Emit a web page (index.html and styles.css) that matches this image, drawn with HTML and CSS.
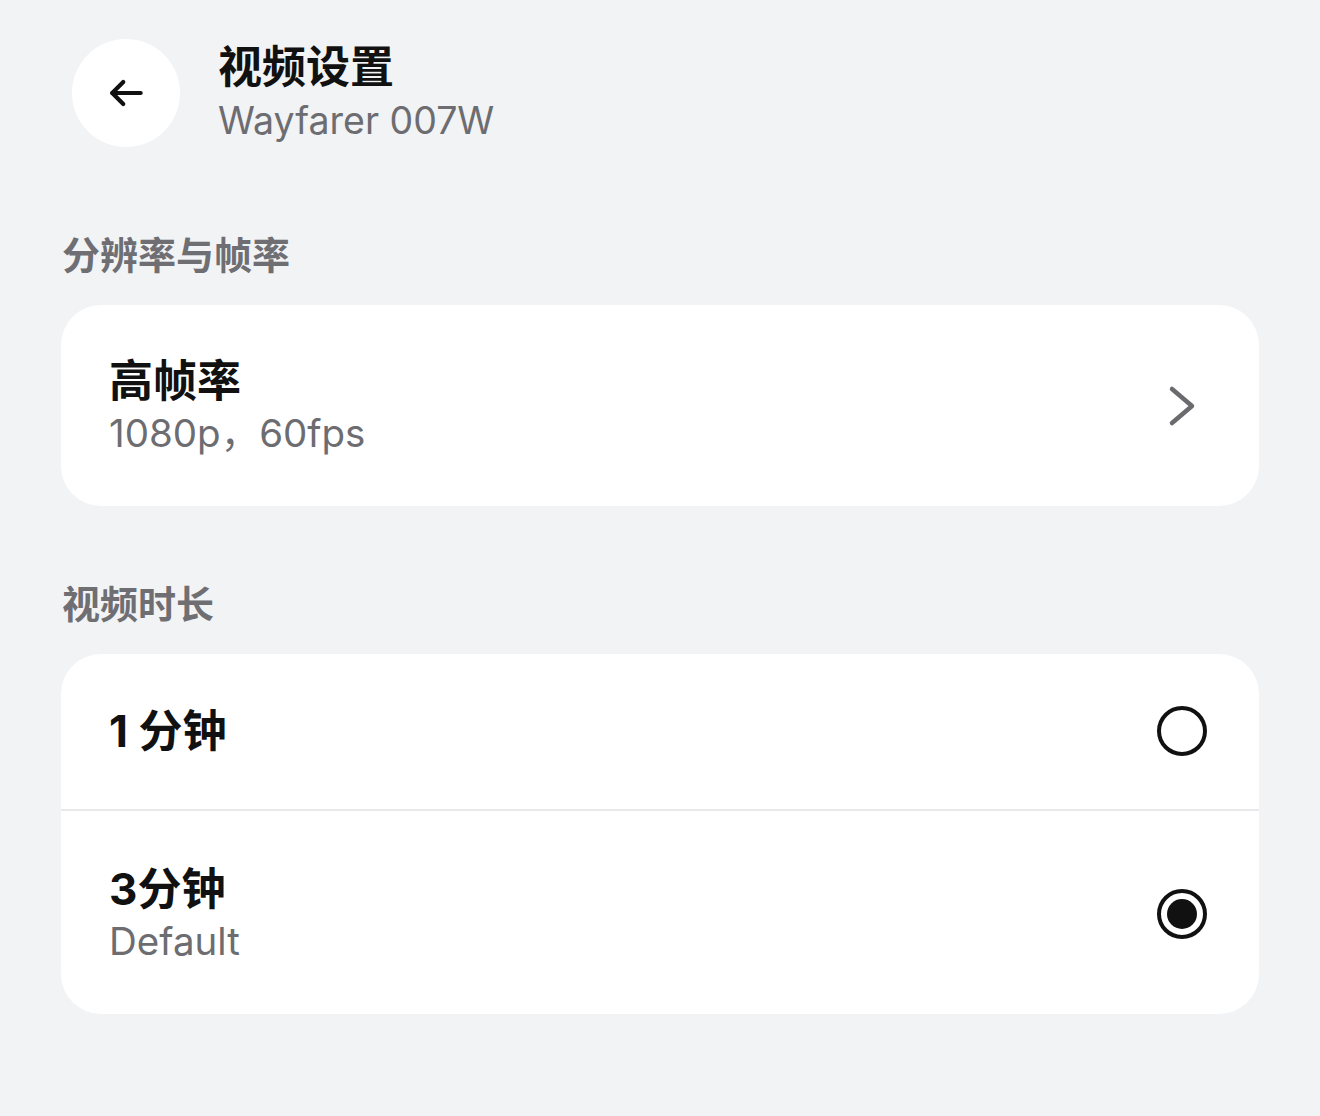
FILE: index.html
```html
<!DOCTYPE html>
<html lang="zh-CN">
<head>
    <meta charset="UTF-8">
    <meta name="viewport" content="width=device-width, initial-scale=1.0">
    <title>视频设置</title>
    <link rel="stylesheet" href="styles.css">
</head>
<body>

<div id="page">
    <div class="header">
        <div class="back-btn">
            <svg width="44" height="44" viewBox="0 0 24 24" fill="none" stroke="#111" stroke-width="2.3" stroke-linecap="round" stroke-linejoin="round">
                <path d="M20 12H4.5"/>
                <path d="M10.5 6l-6 6 6 6"/>
            </svg>
        </div>
        <div class="header-text">
            <div class="title">视频设置</div>
            <div class="subtitle">Wayfarer 007W</div>
        </div>
    </div>

    <div class="section-label first">分辨率与帧率</div>
    <div class="card">
        <div class="row">
            <div class="row-text">
                <div class="row-title">高帧率</div>
                <div class="row-sub">1080p，60fps</div>
            </div>
            <div class="row-icon">
                <svg width="50" height="50" viewBox="0 0 50 50" fill="none" stroke="#6b6b6f" stroke-width="4.5" stroke-linecap="round" stroke-linejoin="round">
                    <path d="M15 8l20 17-20 17"/>
                </svg>
            </div>
        </div>
    </div>

    <div class="section-label">视频时长</div>
    <div class="card">
        <div class="row short">
            <div class="row-text">
                <div class="row-title">1 分钟</div>
            </div>
            <div class="row-icon">
                <span class="radio"></span>
            </div>
        </div>
        <div class="divider"></div>
        <div class="row tall">
            <div class="row-text">
                <div class="row-title">3分钟</div>
                <div class="row-sub">Default</div>
            </div>
            <div class="row-icon">
                <span class="radio checked"></span>
            </div>
        </div>
    </div>
</div>

</body>
</html>
```

FILE: styles.css
```css
body {
    font-family: 'Inter', 'Noto Sans CJK SC', sans-serif;
    background-color: #f2f3f5;
    margin: 0;
    padding: 0;
    color: #111;
}

#page {
    padding: 39px 61px 0 61px;
}

.header {
    display: flex;
    align-items: center;
    gap: 38px;
    padding-left: 11px;
}

.back-btn {
    width: 108px;
    height: 108px;
    border-radius: 50%;
    background-color: #fff;
    display: flex;
    justify-content: center;
    align-items: center;
}

.title {
    font-size: 44px;
    line-height: 50px;
    font-weight: bold;
    color: #111;
}

.subtitle {
    font-size: 37.5px;
    line-height: 46px;
    margin-top: 6px;
    color: #6d6d71;
}

.section-label {
    font-size: 38px;
    line-height: 44px;
    font-weight: bold;
    color: #6e6e73;
    margin: 76px 0 28px 1px;
}

.section-label.first {
    margin-top: 86px;
}

.card {
    background-color: #fff;
    border-radius: 40px;
    overflow: hidden;
}

.row {
    display: flex;
    align-items: center;
    justify-content: space-between;
    padding: 51px 52px 50px 48px;
}

.row.short {
    padding-top: 52px;
    padding-bottom: 53px;
}

.row.tall {
    padding-top: 53px;
}

.row-title {
    font-size: 44px;
    line-height: 50px;
    font-weight: bold;
    color: #111;
}

.row-sub {
    font-size: 38.5px;
    line-height: 46px;
    color: #6d6d71;
    margin-top: 4px;
}

.row-icon {
    width: 50px;
    height: 50px;
    display: flex;
    justify-content: center;
    align-items: center;
}

.divider {
    height: 2px;
    background-color: #e9e9ec;
}

.radio {
    width: 50px;
    height: 50px;
    box-sizing: border-box;
    border: 4px solid #111;
    border-radius: 50%;
    display: flex;
    justify-content: center;
    align-items: center;
}

.radio.checked::after {
    content: '';
    width: 30px;
    height: 30px;
    border-radius: 50%;
    background-color: #111;
}
```
